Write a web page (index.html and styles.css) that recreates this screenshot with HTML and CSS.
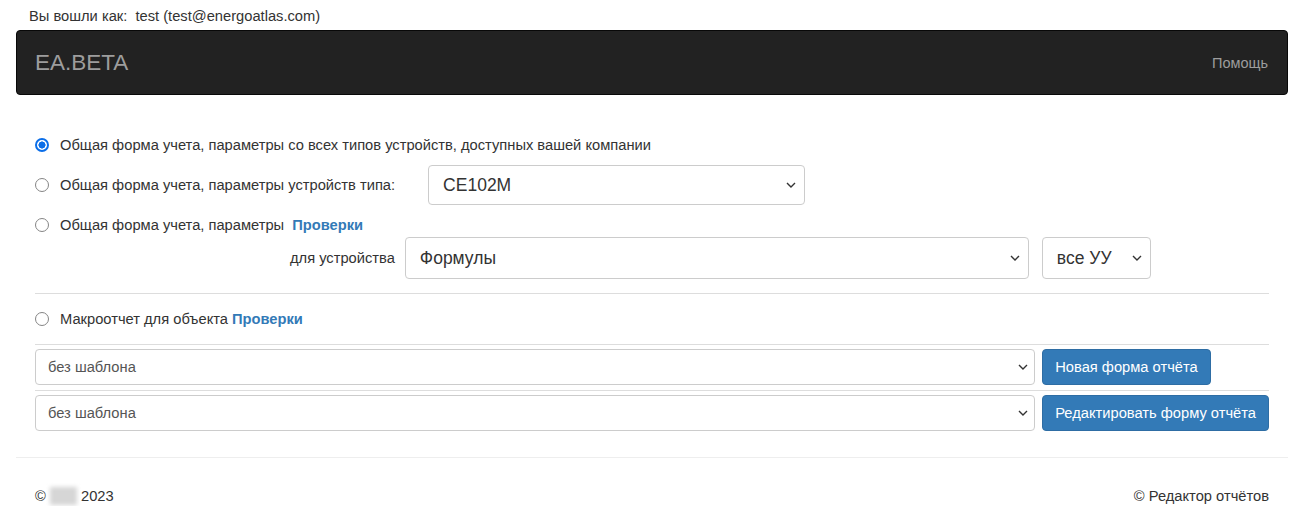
FILE: index.html
```html
<!DOCTYPE html>
<html lang="ru">
<head>
    <meta charset="UTF-8">
    <meta name="viewport" content="width=device-width, initial-scale=1.0">
    <title>Редактор отчётов</title>
    <link rel="stylesheet" href="styles.css">
</head>
<body>
    <div class="login-line">Вы вошли как:&nbsp; test (test@energoatlas.com)</div>

    <nav class="navbar">
        <a class="brand" href="#">EA.BETA</a>
        <a class="nav-link" href="#">Помощь</a>
    </nav>

    <div class="main">
        <label class="radio-row first">
            <input type="radio" name="mode" checked>
            <span>Общая форма учета, параметры со всех типов устройств, доступных вашей компании</span>
        </label>

        <label class="radio-row">
            <input type="radio" name="mode">
            <span>Общая форма учета, параметры устройств типа:</span>
            <select class="select-lg type-select">
                <option>CE102M</option>
            </select>
        </label>

        <label class="radio-row short">
            <input type="radio" name="mode">
            <span>Общая форма учета, параметры</span>
            <a class="obj-link spaced" href="#">Проверки</a>
        </label>

        <div class="device-row">
            <span class="device-label">для устройства</span>
            <select class="select-lg formula-select">
                <option>Формулы</option>
            </select>
            <select class="select-lg uu-select">
                <option>все УУ</option>
            </select>
        </div>

        <hr class="divider wide">

        <label class="radio-row">
            <input type="radio" name="mode">
            <span>Макроотчет для объекта</span>
            <a class="obj-link" href="#">Проверки</a>
        </label>

        <div class="template-grid">
            <hr class="divider">
            <select class="form-control">
                <option>без шаблона</option>
            </select>
            <button class="btn btn-primary" type="button">Новая форма отчёта</button>
            <hr class="divider">
            <select class="form-control">
                <option>без шаблона</option>
            </select>
            <button class="btn btn-primary" type="button">Редактировать форму отчёта</button>
        </div>
    </div>

    <footer class="footer">
        <span>© <span class="blurred"></span> 2023</span>
        <span>© Редактор отчётов</span>
    </footer>
</body>
</html>
```

FILE: styles.css
```css
* {
    box-sizing: border-box;
}

body {
    margin: 0;
    font-family: 'Liberation Sans', Arial, sans-serif;
    font-size: 14.7px;
    line-height: 20px;
    color: #333;
    background: #fff;
}

a {
    text-decoration: none;
}

.login-line {
    height: 30px;
    padding: 6px 0 0 29px;
}

.navbar {
    margin: 0 19px 0 16px;
    height: 65px;
    padding: 0 19px 0 18px;
    background: #222;
    border: 1px solid #080808;
    border-radius: 4px;
    display: flex;
    align-items: center;
    justify-content: space-between;
}

.brand {
    color: #9d9d9d;
    font-size: 22.5px;
    line-height: 24px;
}

.nav-link {
    color: #9d9d9d;
    font-size: 14.5px;
}

.main {
    margin: 30px 38px 0 35px;
}

.radio-row {
    display: flex;
    align-items: center;
    height: 40px;
}

.radio-row.short {
    height: 24px;
    margin-top: 8px;
}

.radio-row input {
    -webkit-appearance: none;
    appearance: none;
    flex: none;
    width: 14px;
    height: 14px;
    margin: 0 11px 0 0;
    border: 1.5px solid #858585;
    border-radius: 50%;
    background: #fff;
}

.radio-row input:checked {
    border: 2px solid #0b6ee8;
    background: radial-gradient(circle, #0b6ee8 0 3.3px, #fff 3.8px);
}

.obj-link {
    color: #337ab7;
    font-weight: bold;
    margin-left: 4px;
}

.obj-link.spaced {
    margin-left: 8px;
}

select {
    font-family: inherit;
    color: #333;
    background-color: #fff;
    border: 1px solid #ccc;
    border-radius: 4px;
    -webkit-appearance: none;
    appearance: none;
    background-image: url("data:image/svg+xml;utf8,<svg xmlns='http://www.w3.org/2000/svg' width='10' height='6' viewBox='0 0 10 6'><path d='M1 1l4 4 4-4' fill='none' stroke='%23333' stroke-width='1.4'/></svg>");
    background-repeat: no-repeat;
    background-position: right 8px center;
}

.select-lg {
    font-size: 17.5px;
    padding: 0 30px 0 14px;
}

.type-select {
    width: 377px;
    height: 40px;
    margin-left: 33px;
}

.device-row {
    display: flex;
    align-items: center;
    height: 42px;
    padding-left: 255px;
}

.device-label {
    margin-right: 10px;
}

.formula-select {
    width: 624px;
    height: 42px;
}

.uu-select {
    width: 109px;
    height: 42px;
    margin-left: 13px;
}

.divider {
    border: 0;
    border-top: 1px solid #ddd;
    margin: 0;
}

.divider.wide {
    margin-top: 14px;
    margin-bottom: 5px;
}

.template-grid {
    display: grid;
    grid-template-columns: 1fr auto;
    column-gap: 7px;
    align-items: center;
}

.template-grid .divider {
    grid-column: 1 / -1;
    margin: 5px 0 4px;
}

.form-control {
    height: 36px;
    font-size: 14.7px;
    color: #555;
    padding: 0 30px 0 12px;
    background-position: right 6px center;
}

.btn {
    font-family: inherit;
    font-size: 14.7px;
    height: 36px;
    padding: 0 12px;
    border-radius: 4px;
    cursor: pointer;
    justify-self: start;
}

.btn-primary {
    color: #fff;
    background: #337ab7;
    border: 1px solid #2e6da4;
}

.footer {
    margin: 26px 19px 0 16px;
    border-top: 1px solid #eee;
    padding: 28px 19px 0 19px;
    display: flex;
    justify-content: space-between;
}

.blurred {
    display: inline-block;
    width: 27px;
    height: 18px;
    vertical-align: -4px;
    background: #d6d6d6;
    filter: blur(2px);
}
```
